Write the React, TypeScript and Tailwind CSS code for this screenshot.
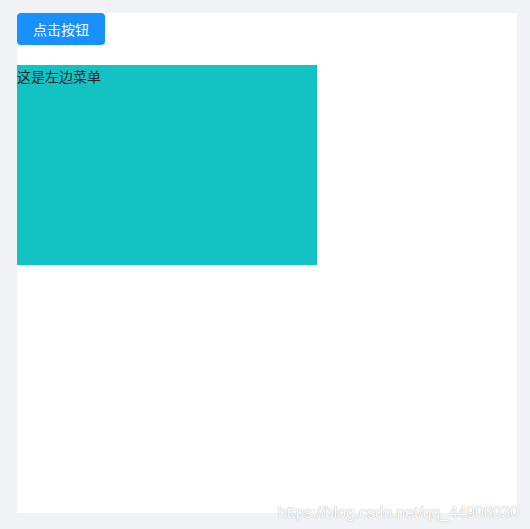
export default function App() {
  return (
    <div className="relative min-h-[529px] bg-[#f0f2f5] pl-[17px] pr-[13px] pt-[13px] pb-[16px] font-['Noto_Sans_CJK_SC','Noto_Sans',sans-serif]">
      {/* content panel */}
      <div className="w-[500px] h-[500px] bg-white">
        <button
          type="button"
          className="h-[32px] w-[88px] rounded-[4px] bg-[#1890ff] text-[14px] text-white"
        >
          点击按钮
        </button>
        <div className="mt-[20px] w-[300px] h-[200px] bg-[#13c2c2] text-[14px] leading-[22px] text-[#262626]">
          这是左边菜单
        </div>
      </div>
      {/* watermark */}
      <div className="absolute left-[278px] top-[501px] text-[15.7px] font-['Liberation_Sans',sans-serif] text-white [text-shadow:0_0_1px_#b8b8b8,0_0_1px_#b8b8b8]">
        https://blog.csdn.net/qq_44908030
      </div>
    </div>
  );
}
